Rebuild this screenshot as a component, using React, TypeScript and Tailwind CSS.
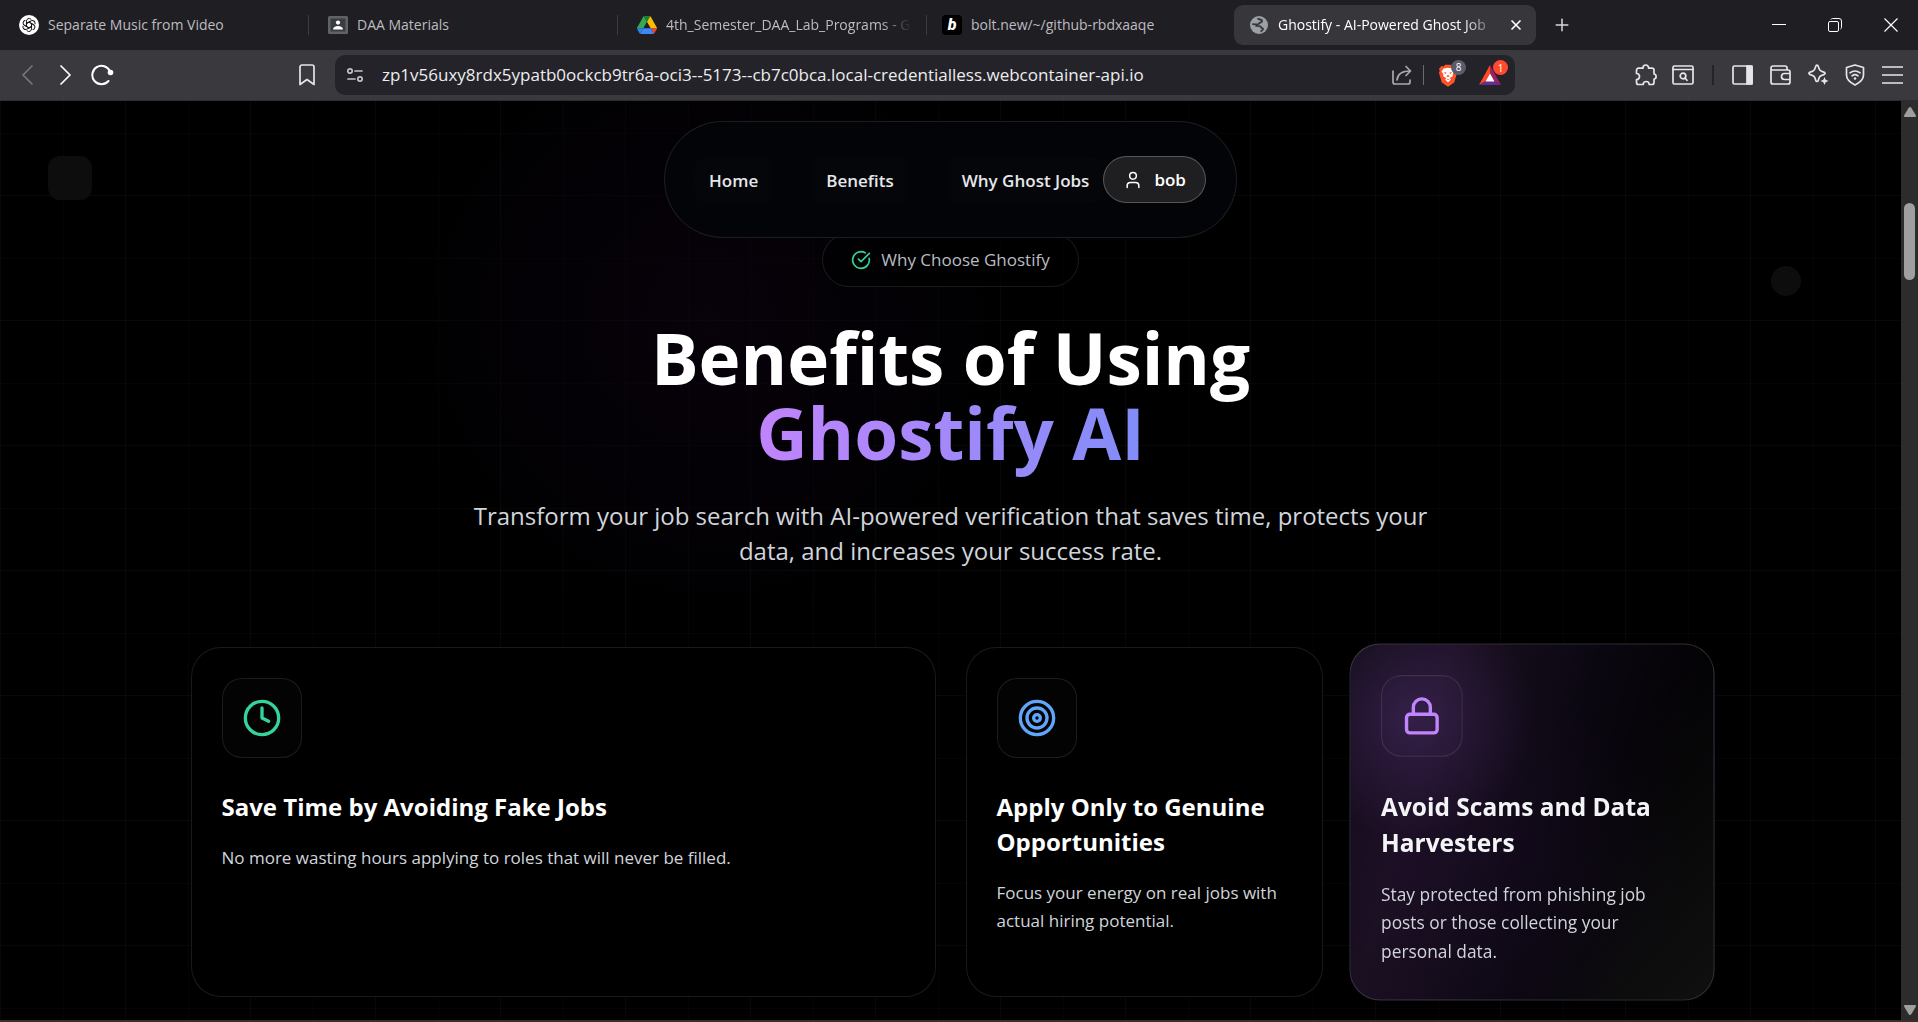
import React from 'react';
import { CircleCheckBig, Clock, Lock, Plus, Target, User, X } from 'lucide-react';

function OpenAiIcon() {
  return (
    <span className="flex size-5 shrink-0 items-center justify-center rounded-full bg-white">
      <svg viewBox="0 0 24 24" className="size-4" fill="none" stroke="#111" strokeWidth="1.5">
        {[0, 60, 120, 180, 240, 300].map((a) => (
          <path key={a} transform={`rotate(${a} 12 12)`} d="M8.2 9.8V6.2a4 4 0 0 1 6.6-3l.6.6M8.2 9.8l3.8-2.2 5.2 3" />
        ))}
      </svg>
    </span>
  );
}

function ClassroomIcon() {
  return (
    <svg viewBox="0 0 20 20" className="size-5 shrink-0">
      <rect x="0" y="1" width="20" height="18" rx="1.5" fill="#5f6368" />
      <rect x="2.5" y="3.5" width="15" height="13" fill="#3a3c40" />
      <circle cx="10" cy="7.6" r="2.1" fill="#fff" />
      <path d="M5 14.5c0-2.4 2.2-3.6 5-3.6s5 1.2 5 3.6z" fill="#fff" />
    </svg>
  );
}

function DriveIcon() {
  return (
    <svg viewBox="0 0 87.3 78" className="size-5 shrink-0">
      <path d="m6.6 66.85 3.85 6.65c.8 1.4 1.95 2.5 3.3 3.3l13.75-23.8h-27.5c0 1.55.4 3.1 1.2 4.5z" fill="#2684fc" />
      <path d="m43.65 25-13.75-23.8c-1.35.8-2.5 1.9-3.3 3.3l-25.4 44a9 9 0 0 0-1.2 4.5h27.5z" fill="#34a853" />
      <path d="m73.55 76.8c1.35-.8 2.5-1.9 3.3-3.3l1.6-2.75 7.65-13.25c.8-1.4 1.2-2.95 1.2-4.5h-27.5l5.85 11.5z" fill="#ea4335" />
      <path d="m43.65 25 13.75-23.8c-1.35-.8-2.9-1.2-4.5-1.2h-18.5c-1.6 0-3.15.45-4.5 1.2z" fill="#188038" />
      <path d="m59.8 53h-32.3l-13.75 23.8c1.35.8 2.9 1.2 4.5 1.2h50.8c1.6 0 3.15-.45 4.5-1.2z" fill="#4285f4" />
      <path d="m73.4 26.5-12.7-22c-.8-1.4-1.95-2.5-3.3-3.3l-13.75 23.8 16.15 28h27.45c0-1.55-.4-3.1-1.2-4.5z" fill="#fbbc04" />
    </svg>
  );
}

function BoltIcon() {
  return (
    <span className="flex size-5 shrink-0 items-center justify-center rounded bg-black font-['Roboto',sans-serif] text-base leading-none font-black text-white italic">
      b
    </span>
  );
}

function GlobeIcon() {
  return (
    <svg viewBox="0 0 20 20" className="size-[18px] shrink-0">
      <circle cx="10" cy="10" r="10" fill="#9aa0a6" />
      <path d="M8.5 2.5c1 2 5 .8 5 3 0 1.7-3 1.3-3.500 3-.3 1.200-2 .5-3.500.8L2.500 9M6 11c2 .3 5.500-.5 6.300 1.500.5 1.500 2.200.6 2.200 2 0 1.200-1.700 1.500-2.500 3" fill="none" stroke="#37363b" strokeWidth="2" />
    </svg>
  );
}

function BraveIcon() {
  return (
    <svg viewBox="0 0 20 24" className="h-[23px] w-5">
      <path d="M14.6 2.500 13 .8H7L5.400 2.500l-2.200-.4L.6 5l.8 2-.9 2.200 3 10.100 6.500 4.400 6.500-4.400 3-10.100L18.600 7l.8-2-2.600-2.900z" fill="#fb542b" />
      <path d="M10 3.800 5.500 4.600 3.200 7.800l2 2.900-.3 2 3.400 1.800-1.400 1.800L10 19l3.100-2.700-1.400-1.800 3.400-1.800-.3-2 2-2.900-2.300-3.200z" fill="#fff" />
      <path d="m5.600 8.200 2.900.8-.8 1.600zM14.400 8.200l-2.900.8.8 1.600zM8.200 12.500l1.800-1 1.800 1L10 13.700zM8.200 16.400 10 15.300l1.800 1.100" fill="#fb542b" />
    </svg>
  );
}

function BatIcon() {
  return (
    <svg viewBox="0 0 22 20" className="h-5 w-[22px]">
      <path d="M11 0 0 20l7-4 4-7z" fill="#ff4724" />
      <path d="M11 0v9l4 7 7 4z" fill="#9e1f63" />
      <path d="M0 20h22l-7-4H7z" fill="#662d91" />
      <path d="m11 8.500-4.500 8h9z" fill="#fff" />
    </svg>
  );
}

function Tab({ icon, title, fade }: { icon: React.ReactNode; title: string; fade?: boolean }) {
  return (
    <button className="flex h-full w-[309px] min-w-0 items-center text-left text-[#bdbcc0]">
      <span className="flex min-w-0 flex-1 items-center gap-[9px] pr-3 pl-[19px]">
        {icon}
        <span className={fade ? 'overflow-hidden whitespace-nowrap [mask-image:linear-gradient(to_right,#000_88%,transparent)]' : 'overflow-hidden whitespace-nowrap'}>
          {title}
        </span>
      </span>
      <span className="h-5 w-px bg-[#3d3c42]" />
    </button>
  );
}

function TabBar() {
  return (
    <header className="flex h-[50px] items-center bg-[#1f1e23] text-sm">
      <Tab icon={<OpenAiIcon />} title="Separate Music from Video" />
      <Tab icon={<ClassroomIcon />} title="DAA Materials" />
      <Tab icon={<DriveIcon />} title="4th_Semester_DAA_Lab_Programs - G" fade />
      <button className="flex h-full w-[307px] items-center gap-[9px] pl-[15px] text-left text-[#bdbcc0]">
        <BoltIcon />
        bolt.new/~/github-rbdxaaqe
      </button>
      <div className="flex h-10 w-[302px] items-center gap-[10px] rounded-[9px] bg-[#37363b] pr-3 pl-4 text-white">
        <GlobeIcon />
        <span className="min-w-0 flex-1 overflow-hidden whitespace-nowrap [mask-image:linear-gradient(to_right,#000_84%,transparent)]">
          Ghostify - AI-Powered Ghost Job
        </span>
        <button aria-label="Close tab">
          <X className="size-4" strokeWidth={2.5} />
        </button>
      </div>
      <button aria-label="New tab" className="ml-4 text-[#d8d8da]">
        <Plus className="size-5" strokeWidth={1.8} />
      </button>
      <div className="ml-auto flex items-center gap-[42px] pr-5 text-white">
        <button aria-label="Minimize">
          <svg viewBox="0 0 14 14" className="size-[14px]" stroke="currentColor"><path d="M0 6.500h14" /></svg>
        </button>
        <button aria-label="Restore">
          <svg viewBox="0 0 14 14" className="size-[14px]" fill="none" stroke="currentColor">
            <rect x=".5" y="3.500" width="10" height="10" rx="1.500" />
            <path d="M3 1.500c.3-.6.800-1 1.500-1H11a2.500 2.500 0 0 1 2.500 2.500v6.500c0 .7-.4 1.200-1 1.500" />
          </svg>
        </button>
        <button aria-label="Close window">
          <svg viewBox="0 0 14 14" className="size-[14px]" stroke="currentColor" strokeWidth="1.200"><path d="M.5.5l13 13M13.500.5l-13 13" /></svg>
        </button>
      </div>
    </header>
  );
}

const line = { fill: 'none', stroke: 'currentColor', strokeWidth: 1.7, strokeLinecap: 'round', strokeLinejoin: 'round' } as const;

function Toolbar() {
  return (
    <div className="flex h-[51px] items-center border-b border-[#2d2c31] bg-[#3a393e] text-[#e6e6e9]">
      <div className="flex w-[335px] items-center pl-[18px]">
        <button aria-label="Back" className="text-[#77767b]">
          <svg viewBox="0 0 20 20" className="size-5" {...line}><path d="M14 1 5 10l9 9" /></svg>
        </button>
        <button aria-label="Forward" className="ml-[18px] text-white">
          <svg viewBox="0 0 20 20" className="size-5" {...line}><path d="m5 1 9 9-9 9" /></svg>
        </button>
        <button aria-label="Reload" className="ml-[14px] text-white">
          <svg viewBox="0 0 24 22" className="h-[22px] w-6" {...line} strokeWidth={2}>
            <path d="M18.500 17A9.200 9.200 0 1 1 20 7.500" />
            <circle cx="20.500" cy="8.500" r="2.800" fill="currentColor" stroke="none" />
          </svg>
        </button>
        <button aria-label="Bookmark" className="mr-5 ml-auto">
          <svg viewBox="0 0 16 22" className="h-[22px] w-4" {...line}><path d="M1 3a2 2 0 0 1 2-2h10a2 2 0 0 1 2 2v17.500l-7-5-7 5z" /></svg>
        </button>
      </div>
      <div className="flex h-10 min-w-0 flex-1 items-center rounded-[10px] bg-[#242329] pr-[14px] pl-3">
        <svg viewBox="0 0 16 16" className="size-4 shrink-0 text-[#c4c4c8]" {...line}>
          <circle cx="3" cy="4" r="2.200" /><path d="M8 4h7" /><circle cx="13" cy="12" r="2.200" /><path d="M1 12h7" />
        </svg>
        <input
          aria-label="Address"
          readOnly
          value="zp1v56uxy8rdx5ypatb0ockcb9tr6a-oci3--5173--cb7c0bca.local-credentialless.webcontainer-api.io"
          className="ml-[19px] min-w-0 flex-1 bg-transparent text-[17px] text-[#ededee] outline-none"
        />
        <button aria-label="Share" className="text-[#a9a9ad]">
          <svg viewBox="0 0 20 20" className="size-5" {...line}>
            <path d="M1 6v11a2 2 0 0 0 2 2h13a2 2 0 0 0 2-2v-2M14 1.500 18.500 6 14 10.500M18.500 6C11 6 5.500 9 5 15" />
          </svg>
        </button>
        <span className="mx-[11px] h-5 w-px bg-[#6b6a70]" />
        <button aria-label="Shields" className="relative ml-[3px]">
          <BraveIcon />
          <span className="absolute -top-1 left-[13px] flex size-[15px] items-center justify-center rounded-full bg-[#5b5c6b] text-[10px] leading-none text-white">8</span>
        </button>
        <button aria-label="Rewards" className="relative ml-[21px]">
          <BatIcon />
          <span className="absolute -top-[5px] left-[14px] flex size-[15px] items-center justify-center rounded-full bg-[#ff4a2b] text-[10px] leading-none text-white">1</span>
        </button>
      </div>
      <div className="flex w-[403px] items-center justify-end pr-[15px]">
        <button aria-label="Extensions">
          <svg viewBox="0 0 22 22" className="size-[22px]" {...line}>
            <path d="M8 4.200V3.800a2.800 2.800 0 0 1 5.600 0v.4h3.400a2 2 0 0 1 2 2V10c2.800.2 2.800 4.800 0 5v3.500a2 2 0 0 1-2 2h-2.800c0-4-6-4-6 0H3.500a2 2 0 0 1-2-2V15.500c4 0 4-6 0-6V6.200a2 2 0 0 1 2-2z" />
          </svg>
        </button>
        <button aria-label="Search tabs" className="ml-[15px]">
          <svg viewBox="0 0 22 20" className="h-5 w-[22px]" {...line}>
            <rect x="1" y="1" width="20" height="18" rx="1.500" /><path d="M1 4.500h20" /><circle cx="11" cy="11" r="2.800" /><path d="m13 13 2 2.300" />
          </svg>
        </button>
        <span className="mr-[18px] ml-[18px] h-5 w-0.5 bg-[#242329]" />
        <button aria-label="Sidebar">
          <svg viewBox="0 0 21 20" className="h-5 w-[21px]" {...line}>
            <rect x="1" y="1" width="19" height="18" rx="1.500" /><path d="M15 1h5v18h-5z" fill="currentColor" />
          </svg>
        </button>
        <button aria-label="Wallet" className="ml-[17px]">
          <svg viewBox="0 0 21 20" className="h-5 w-[21px]" {...line}>
            <path d="M17 5V3a2 2 0 0 0-2-2H3a2 2 0 0 0-2 2v14a2 2 0 0 0 2 2h15a2 2 0 0 0 2-2V7a2 2 0 0 0-2-2H1.500M20 8.500h-5.500a3 3 0 0 0-3 3v0a3 3 0 0 0 3 3H20" />
          </svg>
        </button>
        <button aria-label="Leo assistant" className="ml-4">
          <svg viewBox="0 0 22 22" className="size-[22px]" {...line}>
            <path d="M10 1.200c.7 0 1.100.5 1.300 1.200.9 3.700 1.800 4.700 5.500 5.700 1.700.5 1.700 2 0 2.500-3.700 1-4.600 2-5.500 5.700-.4 1.600-2.200 1.600-2.600 0C7.800 12.600 6.900 11.600 3.200 10.600c-1.700-.5-1.700-2 0-2.500C6.900 7.100 7.800 6.100 8.700 2.400 8.900 1.700 9.300 1.200 10 1.200z" />
            <path d="m17.500 13 1.200 2.800 2.800 1.200-2.800 1.200-1.200 2.800-1.200-2.800-2.800-1.200 2.800-1.200z" fill="currentColor" stroke="none" />
          </svg>
        </button>
        <button aria-label="VPN" className="ml-[15px]">
          <svg viewBox="0 0 22 22" className="size-[22px]" {...line}>
            <path d="M11 1 2.500 3.500V11c0 4.500 3.500 7.500 8.500 10 5-2.500 8.500-5.500 8.500-10V3.500zM6 8.800a8 8 0 0 1 10 0M8 11.800a4.800 4.800 0 0 1 6 0" /><circle cx="11" cy="14.500" r="1.300" fill="currentColor" stroke="none" />
          </svg>
        </button>
        <button aria-label="Menu" className="ml-4">
          <svg viewBox="0 0 21 18" className="h-[18px] w-[21px]" {...line} strokeLinecap="butt"><path d="M0 1h21M0 9h21M0 17h21" /></svg>
        </button>
      </div>
    </div>
  );
}

function Nav() {
  return (
    <nav className="relative z-10 mx-auto flex h-[117px] w-fit items-center rounded-full border border-white/10 bg-[#030408]/90 px-[30px] text-[17px] font-semibold text-gray-200">
      <a href="#home" className="rounded-xl bg-white/1 px-[14px] pt-3 pb-[10px] leading-6">Home</a>
      <a href="#benefits" className="ml-10 rounded-xl bg-white/1 px-[14px] pt-3 pb-[10px] leading-6">Benefits</a>
      <a href="#why" className="ml-10 rounded-xl bg-white/1 px-[14px] pt-3 pb-[10px] leading-6">Why Ghost Jobs</a>
      <button className="flex h-[47px] items-center gap-[11px] rounded-full border border-white/25 bg-[#1f1f21] px-[19px] text-white">
        <User className="size-5" strokeWidth={1.8} />
        bob
      </button>
    </nav>
  );
}

function Card({ icon, title, text, className }: { icon: React.ReactNode; title: string; text: string; className: string }) {
  return (
    <article className={className}>
      <div className="flex size-20 items-center justify-center rounded-[20px] border border-white/10 bg-white/1">{icon}</div>
      <h3 className="mt-[31px] text-2xl leading-[35px] font-bold">{title}</h3>
      <p className="mt-5 text-[17px] leading-7 text-[#d1d5db]">{text}</p>
    </article>
  );
}

function Page() {
  return (
    <main className="relative min-w-0 flex-1 overflow-hidden bg-black bg-[linear-gradient(to_right,#ffffff08_1px,transparent_1px),linear-gradient(to_bottom,#ffffff08_1px,transparent_1px),linear-gradient(to_right,#ffffff05_1px,transparent_1px),linear-gradient(to_bottom,#ffffff05_1px,transparent_1px)] bg-[size:125px_125px] bg-[position:0_94px,0_94px,63px_32px,63px_32px] pt-5">
      <div className="pointer-events-none absolute top-[-100px] left-[390px] size-[640px] bg-[radial-gradient(closest-side,#0f031480,#07020b80_50%,transparent)]" />
      <div className="absolute top-[55px] left-12 size-11 rounded-xl bg-[#0d0d0d]" />
      <div className="absolute top-[165px] right-[100px] size-[30px] rounded-full bg-[#0d0d0d]" />
      <Nav />
      <section className="relative mx-auto -mt-[5px] w-[1520px] max-w-full">
        <div className="mx-auto flex h-[54px] w-fit items-center gap-[10px] rounded-full border border-white/10 bg-black/60 px-7 text-[17px] text-[#b9bcc2]">
          <CircleCheckBig className="size-5 text-[#34d399]" />
          Why Choose Ghostify
        </div>
        <h1 className="mt-[33px] text-center text-[71px] leading-[75px] font-bold text-white">
          Benefits of Using
          <br />
          <span className="bg-linear-to-r from-[#c084fc] to-[#818cf8] bg-clip-text text-transparent">Ghostify AI</span>
        </h1>
        <p className="mx-auto mt-7 max-w-[960px] text-center text-2xl leading-[35px] text-[#d1d5db]">
          Transform your job search with AI-powered verification that saves time, protects your data, and increases your success rate.
        </p>
        <div className="mt-[79px] grid grid-cols-4 gap-[30px]">
          <Card
            className="col-span-2 h-[350px] rounded-[30px] border border-white/10 bg-black p-[30px] text-white"
            icon={<Clock className="size-10 text-[#34d399]" />}
            title="Save Time by Avoiding Fake Jobs"
            text="No more wasting hours applying to roles that will never be filled."
          />
          <Card
            className="h-[350px] rounded-[30px] border border-white/10 bg-black p-[30px] text-white"
            icon={<Target className="size-10 text-[#60a5fa]" />}
            title="Apply Only to Genuine Opportunities"
            text="Focus your energy on real jobs with actual hiring potential."
          />
          <Card
            className="h-[350px] scale-[1.02] rounded-[30px] border border-white/15 bg-[#030204] bg-[radial-gradient(circle_at_60px_70px,#42265f99,transparent_120px),radial-gradient(ellipse_at_18%_62%,#240f354d,transparent_65%),linear-gradient(105deg,#100c14_0%,#1a1020_22%,#0b0711_55%,transparent_80%),linear-gradient(135deg,transparent_50%,#101010)] p-[30px] text-gray-100"
            icon={<Lock className="size-10 text-[#c084fc]" />}
            title="Avoid Scams and Data Harvesters"
            text="Stay protected from phishing job posts or those collecting your personal data."
          />
        </div>
      </section>
    </main>
  );
}

function Scrollbar() {
  return (
    <aside aria-hidden="true" className="flex w-[17px] flex-col items-center bg-[#2c2c2c] pt-[6px] text-[#9f9f9f]">
      <svg viewBox="0 0 12 10" className="h-[10px] w-3 shrink-0" fill="currentColor"><path d="M6 0c.6 0 1 .3 1.300.8l4.500 7.500c.4.800 0 1.700-.8 1.700H1c-.8 0-1.200-.9-.8-1.700L4.700.8C5 .3 5.400 0 6 0z" /></svg>
      <div className="mt-[86px] h-[77px] w-[11px] rounded-full bg-[#9f9f9f]" />
      <svg viewBox="0 0 12 10" className="mt-auto mb-[5px] h-[10px] w-3 shrink-0 rotate-180" fill="currentColor"><path d="M6 0c.6 0 1 .3 1.300.8l4.500 7.500c.4.800 0 1.700-.8 1.700H1c-.8 0-1.200-.9-.8-1.700L4.700.8C5 .3 5.400 0 6 0z" /></svg>
    </aside>
  );
}

export default function App() {
  return (
    <div className="flex h-screen flex-col bg-black font-['Open_Sans','Noto_Sans',sans-serif]">
      <TabBar />
      <Toolbar />
      <div className="flex min-h-0 flex-1 border-b-2 border-[#3a2f28]">
        <Page />
        <Scrollbar />
      </div>
    </div>
  );
}
